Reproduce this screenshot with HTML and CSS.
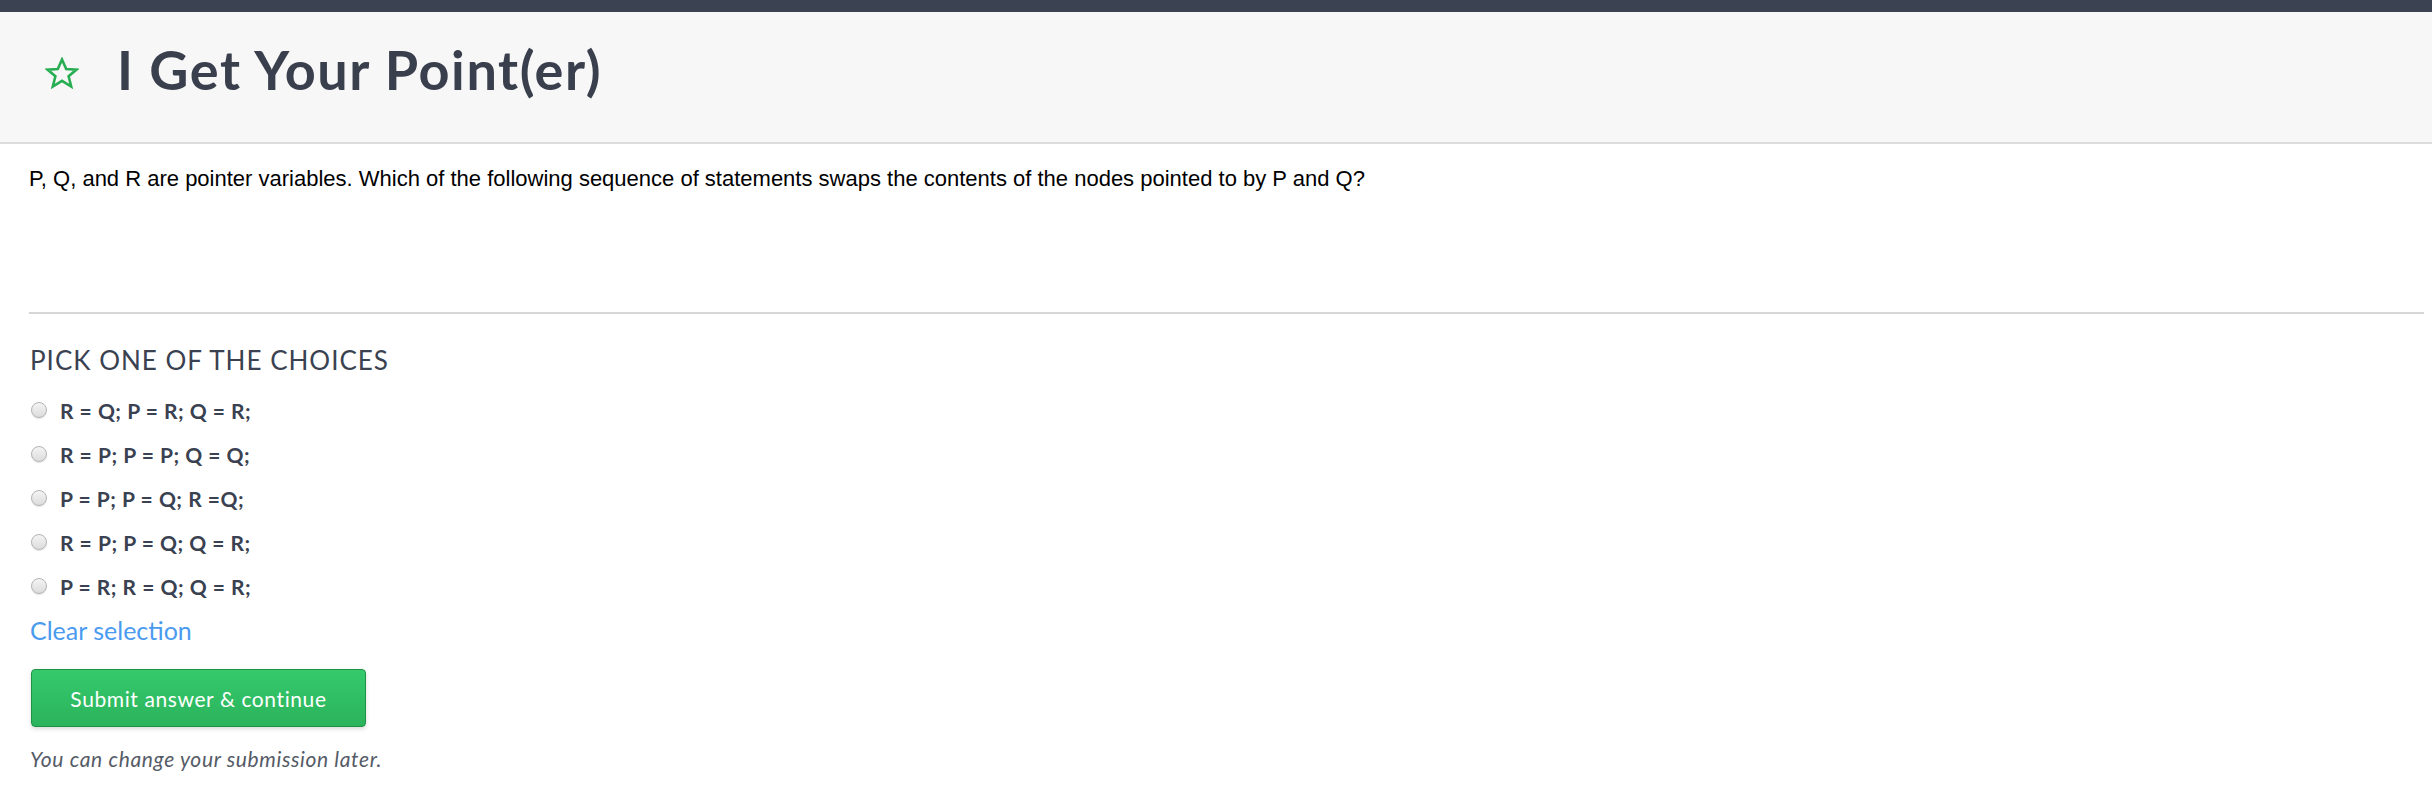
FILE: index.html
```html
<!DOCTYPE html>
<html>
<head>
<meta charset="utf-8">
<link rel="stylesheet" href="styles.css">
</head>
<body>
<div class="topbar"></div>
<header class="header">
  <svg class="star" viewBox="0 0 34 32" width="34" height="32">
    <polygon points="17,2.5 21.2,12 31.5,12.6 23.6,19.2 26.2,29.5 17,23.8 7.8,29.5 10.4,19.2 2.5,12.6 12.8,12" fill="none" stroke="#27ad52" stroke-width="2.6" stroke-linejoin="miter"/>
  </svg>
  <h1 class="title">I Get Your Point(er)</h1>
</header>
<main class="main">
  <p class="question">P, Q, and R are pointer variables. Which of the following sequence of statements swaps the contents of the nodes pointed to by P and Q?</p>
  <hr class="divider">
  <h2 class="pick">PICK ONE OF THE CHOICES</h2>
  <ul class="choices">
    <li class="choice"><span class="radio"></span><span class="label">R = Q; P = R; Q = R;</span></li>
    <li class="choice"><span class="radio"></span><span class="label">R = P; P = P; Q = Q;</span></li>
    <li class="choice"><span class="radio"></span><span class="label">P = P; P = Q; R =Q;</span></li>
    <li class="choice"><span class="radio"></span><span class="label">R = P; P = Q; Q = R;</span></li>
    <li class="choice"><span class="radio"></span><span class="label">P = R; R = Q; Q = R;</span></li>
  </ul>
  <a class="clear">Clear selection</a>
  <button class="submit">Submit answer &amp; continue</button>
  <p class="note">You can change your submission later.</p>
</main>
</body>
</html>
```
FILE: styles.css
```css
html, body {
  margin: 0;
  padding: 0;
  background: #ffffff;
}
body {
  font-family: Lato, "Open Sans", sans-serif;
  color: #3a4150;
}
.topbar {
  height: 12px;
  background: #3b4251;
}
.header {
  height: 130px;
  background: #f7f7f7;
  border-bottom: 2px solid #dddddd;
  display: flex;
  align-items: center;
  padding-left: 45px;
  box-sizing: content-box;
}
.star {
  display: block;
  margin-top: -9px;
}
.title {
  margin: 0 0 0 38px;
  font-size: 54px;
  font-weight: 700;
  line-height: 1;
  letter-spacing: 1.6px;
  color: #393f4c;
  padding-bottom: 14px;
}
.main {
  padding: 0 8px 0 29px;
}
.question {
  margin: 22px 0 0 0;
  font-family: "Liberation Sans", Arial, sans-serif;
  font-size: 22px;
  line-height: 25px;
  color: #000000;
}
.divider {
  margin: 121px 0 0 0;
  border: 0;
  height: 2px;
  background: #d6d6d6;
}
.pick {
  margin: 30px 0 0 1px;
  font-size: 26px;
  font-weight: 400;
  line-height: 32px;
  letter-spacing: 1px;
  color: #3a4150;
}
.choices {
  list-style: none;
  margin: 12px 0 0 0;
  padding: 0;
}
.choice {
  display: flex;
  align-items: center;
  height: 44px;
}
.radio {
  width: 14px;
  height: 14px;
  border-radius: 50%;
  border: 1px solid #b4b4b4;
  background: linear-gradient(#f4f4f4, #dcdcdc);
  box-shadow: 0 1px 1px rgba(0,0,0,0.12);
  margin-left: 2px;
  margin-right: 13px;
}
.label {
  font-size: 21px;
  font-weight: 700;
  letter-spacing: 0.5px;
  color: #3a4150;
}
.clear {
  display: block;
  margin: 6px 0 0 1px;
  font-size: 25px;
  line-height: 32px;
  color: #4a9af0;
}
.submit {
  display: block;
  margin: 23px 0 0 2px;
  width: 335px;
  height: 58px;
  border: 1px solid #1c9443;
  border-radius: 4px;
  background: linear-gradient(#35c96c, #2bb35c);
  box-shadow: 0 2px 4px rgba(0,0,0,0.15);
  color: #ffffff;
  font-family: Lato, "Open Sans", sans-serif;
  font-size: 21px;
  font-weight: 400;
  letter-spacing: 0.6px;
  cursor: pointer;
}
.note {
  margin: 19px 0 0 1px;
  font-size: 21px;
  font-style: italic;
  letter-spacing: 0.65px;
  color: #555b66;
}
```
